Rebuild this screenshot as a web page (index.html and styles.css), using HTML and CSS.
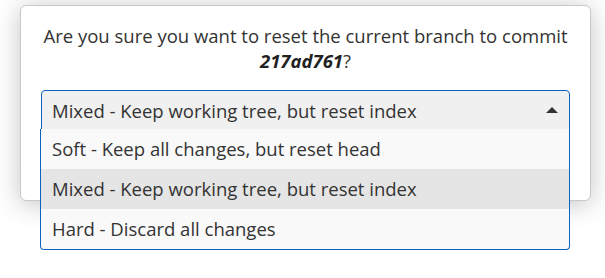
FILE: index.html
```html
<!DOCTYPE html>
<html lang="en">
<head>
    <meta charset="UTF-8">
    <meta name="viewport" content="width=device-width, initial-scale=1.0">
    <title>Reset Branch</title>
    <link rel="stylesheet" href="styles.css">
</head>
<body>

<div class="dialog">
    <p class="question">Are you sure you want to reset the current branch to commit <b><i>217ad761</i></b>?</p>
    <div class="select open">
        <div class="select-value">
            <span>Mixed - Keep working tree, but reset index</span>
            <span class="arrow"></span>
        </div>
        <ul class="options">
            <li>Soft - Keep all changes, but reset head</li>
            <li class="selected">Mixed - Keep working tree, but reset index</li>
            <li>Hard - Discard all changes</li>
        </ul>
    </div>
</div>

</body>
</html>
```

FILE: styles.css
```css
html {
    height: 100%;
}

body {
    margin: 0;
    min-height: 100%;
    box-sizing: border-box;
    padding: 5px 14px 0 20px;
    font-family: "Open Sans", "Noto Sans", sans-serif;
    background-color: #fff;
    color: #333;
}

.dialog {
    background-color: #fff;
    border: 1px solid #c8c8c8;
    border-radius: 6px;
    box-shadow: 0 3px 26px rgba(0, 0, 0, 0.24);
    padding: 17px 20px 70px 20px;
    height: 107px;
}

.question {
    margin: 0;
    text-align: center;
    font-size: 18.5px;
    line-height: 25px;
}

.question b {
    color: #222;
}

.select {
    position: relative;
    margin-top: 17px;
    font-size: 18.5px;
}

.select-value {
    display: flex;
    justify-content: space-between;
    align-items: center;
    height: 38px;
    padding: 0 11px 0 10px;
    background-color: #f0f0f0;
    border: 1px solid #0b63c1;
    border-radius: 4px 4px 0 0;
}

.arrow {
    width: 0;
    height: 0;
    border-left: 6px solid transparent;
    border-right: 6px solid transparent;
    border-bottom: 6px solid #333;
}

.options {
    position: absolute;
    left: -1px;
    right: 0;
    top: 39px;
    margin: 0;
    padding: 0;
    list-style: none;
    background-color: #f9f9f9;
    border: 1px solid #0b63c1;
    border-top: none;
    border-radius: 0 0 4px 4px;
}

.options li {
    height: 40px;
    line-height: 40px;
    padding-left: 11px;
}

.options li.selected {
    background-color: #e5e5e5;
}
```
